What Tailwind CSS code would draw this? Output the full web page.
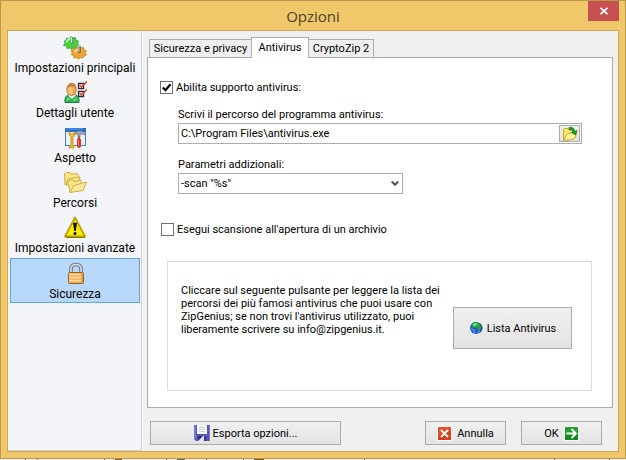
<!DOCTYPE html>
<html lang="it">
<head>
    <meta charset="UTF-8">
    <meta name="viewport" content="width=device-width, initial-scale=1">
    <title>Opzioni</title>
    <script src="https://cdn.jsdelivr.net/npm/@tailwindcss/browser@4"></script>
</head>
<body class="min-h-screen flex flex-col bg-white font-['Roboto',sans-serif] text-[11px] leading-[13px] text-black">
<div class="flex-1 flex flex-col border border-[#b8984d] bg-[#f0c869] px-[6px] pb-[6px]">
  <!-- Barra del titolo -->
  <header class="relative h-[29px] flex items-center justify-center">
    <h1 class="text-[15px] leading-6 text-[#4a4231] font-['Open_Sans',sans-serif]">Opzioni</h1>
    <button class="absolute top-0 right-0 w-[31px] h-5 flex items-center justify-center bg-[#c75050]" aria-label="Chiudi">
      <svg class="w-2 h-2" viewBox="0 0 8 8" stroke="#fff" stroke-width="1.8"><path d="M.5.8l7 6.400M7.500.8l-7 6.400"/></svg>
    </button>
  </header>

  <div class="flex-1 flex border border-[#cfa755] bg-[#f0f0f0]">
    <!-- Categorie -->
    <nav class="w-[134px] shrink-0 flex flex-col bg-[#f4f5f8] border-r border-b border-[#d0d0d0] pl-[2px] pr-px pt-[2px] text-xs leading-4">
      <button class="h-[45px] flex flex-col items-center pt-[3px]">
        <svg class="w-6 h-6" viewBox="0 0 24 24">
          <path d="M1 5l2-.5L3.500 2l2.500.5L8 .5l2 1.500 2.500-.5.5 2.500 2.500 1-1 2 1.500 2-2.500 1-.5 2.500-2.500-.5-2 1.500-2-1.500-2.500.5L3.500 10 .5 9.500 2 7z" fill="#43d03c" stroke="#37a03a" stroke-width=".7"/>
          <path d="M3.500 6.500q1-3.500 4-4" stroke="#a9f79c" stroke-width="1.800" fill="none"/>
          <path d="M9 1v7" stroke="#6f8f76" stroke-width="2.400"/><path d="M8.500 1v6" stroke="#dfe6ea"/>
          <path d="M8 15l2.500-1v-2.500l3 .5 2-1.500 2 1.500 3-.5.500 2.500 2.500 1-1.500 2 1.500 2-2.500 1-1 2-2.500-.5-2 1.500-2-1.500-2.500.5-.5-2.500-2.500-1 1.500-1.500z" fill="#eda731" stroke="#b5771c" stroke-width=".7"/>
          <path d="M11.500 16q2-3 5-2.500" stroke="#ffe090" stroke-width="1.800" fill="none"/>
          <path d="M16.500 10v7" stroke="#5f6369" stroke-width="2.400"/><path d="M16 10v6" stroke="#cfd3d8"/>
        </svg>
        <span>Impostazioni principali</span>
      </button>
      <button class="h-[45px] flex flex-col items-center pt-[3px]">
        <svg class="w-6 h-6" viewBox="0 0 24 24">
          <path d="M2 21.500v-3q0-4 5-5h4q5 1 5 5v3z" fill="#36b557" stroke="#15803b"/>
          <path d="M5 14l4 4 4-4z" fill="#fff"/><path d="M4 20q0-3 3-3M11 20q1-3 3-2" stroke="#98eaa6" fill="none"/>
          <ellipse cx="8.500" cy="8.500" rx="4.700" ry="6" fill="#f7a653" stroke="#c07a3a"/>
          <path d="M4.500 7q0-5 4.500-5 4 0 4 4.500-5-2-8.500.5z" fill="#c98245"/>
          <ellipse cx="7.500" cy="9.500" rx="2.500" ry="3.500" fill="#ffc07a"/>
          <path d="M15.500 2.500h5v5h-5zM15.500 10.500h5v5h-5z" fill="#fff" stroke="#282f45" stroke-width="1.300"/>
          <path d="M16.500 4l2 2L24 .5M16.500 12l2 2L24 8.500" fill="none" stroke="#ef3524" stroke-width="1.500"/>
        </svg>
        <span>Dettagli utente</span>
      </button>
      <button class="h-[45px] flex flex-col items-center pt-[3px]">
        <svg class="w-6 h-6" viewBox="0 0 24 24">
          <rect x="2.500" y="2.500" width="20" height="17" fill="#eaf2fc" stroke="#3f82cf"/>
          <path d="M2 2h21v4H2z" fill="#2568d2"/><path d="M3 3h17" stroke="#5ba2f5"/>
          <path d="M6 5v4l2 2v8l-2 2v1h5v-1l-1-2v-8l2-2V5l-2 3H8z" fill="#f4bf2a" stroke="#b9800d" stroke-width=".7"/>
          <path d="M12 8l2-3h6l3 4-4-1h-2v3h-2V8z" fill="#a8adb5" stroke="#646973" stroke-width=".7"/>
          <path d="M16 10v3" stroke="#777" stroke-width="2"/>
          <path d="M16 14v6" stroke="#d93520" stroke-width="4" stroke-linecap="round"/><path d="M15.500 14v6" stroke="#ff795d"/>
        </svg>
        <span>Aspetto</span>
      </button>
      <button class="h-[45px] flex flex-col items-center pt-[3px]">
        <svg class="w-6 h-6" viewBox="0 0 24 24" fill="#fbe58a" stroke="#ceb042" stroke-linejoin="round">
          <path d="M2 14L1.500 3 3 1.500h4L8 3l6-.5 1.500 2V7L5 8.500z"/>
          <path d="M3 14L5 8l12-2-2 8z" fill="#fbe99a"/>
          <path d="M7 21.500L5 11l1.500-2H10l1.500 1.500L18 9v4z"/>
          <path d="M7 21.500l3.500-7L23.500 11 20 19.500z" fill="#fbe99a"/>
        </svg>
        <span>Percorsi</span>
      </button>
      <button class="h-[45px] flex flex-col items-center pt-[3px]">
        <svg class="w-6 h-6" viewBox="0 0 24 24">
          <path d="M12 1.500L22 20.500H2z" fill="#ffed00" stroke="#b7a300" stroke-width="1.800" stroke-linejoin="round"/>
          <path d="M3 21.500h19" stroke="#827500"/>
          <path d="M10 7q2-1 4 0l-1.200 8h-1.600z" fill="#111"/><circle cx="12" cy="17.500" r="1.600" fill="#111"/>
        </svg>
        <span>Impostazioni avanzate</span>
      </button>
      <button class="h-[45px] flex flex-col items-center pt-[3px] border border-[#62a3e1] bg-[#b8d8f9]">
        <svg class="w-6 h-6" viewBox="0 0 24 24">
          <path d="M8 12V7.500q0-5 5-5t5 5V12" fill="none" stroke="#6f7680" stroke-width="3.600"/>
          <path d="M8 12V7.500q0-5 5-5t5 5V12" fill="none" stroke="#d6dce3" stroke-width="1.600"/>
          <rect x="5.500" y="10.500" width="15" height="11" rx="1" fill="#f7ad55" stroke="#9b622d"/>
          <path d="M6 12.500h13M6 15.500h13M6 18.500h13" stroke="#ffdfa8" stroke-width="1.400"/>
          <path d="M19 11v10" stroke="#dc8736"/>
        </svg>
        <span>Sicurezza</span>
      </button>
    </nav>

    <main class="flex-1 flex flex-col border-l border-white pl-1 pr-[5px] pt-[6px] pb-[6px]">
      <!-- Schede -->
      <div class="flex items-end pl-[2px] -mb-px relative" role="tablist">
        <button class="w-[103px] h-[19px] border border-[#acacac] bg-[#efefef] whitespace-nowrap" role="tab">Sicurezza e privacy</button>
        <button class="w-[58px] h-[21px] -ml-px border border-b-0 border-[#acacac] bg-white pb-[2px] whitespace-nowrap" role="tab" aria-selected="true">Antivirus</button>
        <button class="w-[66px] h-[19px] -ml-px border border-[#acacac] bg-[#efefef] whitespace-nowrap" role="tab">CryptoZip 2</button>
      </div>

      <section class="flex-1 flex flex-col border border-[#acacac] bg-white pl-3 pr-5 pt-[23px] pb-4">
        <label class="flex items-center gap-[3px] h-[13px]">
          <span class="relative w-[13px] h-[13px]">
            <input type="checkbox" checked class="peer block appearance-none w-[13px] h-[13px] border border-[#707070] bg-white">
            <svg class="absolute inset-0 w-[13px] h-[13px] hidden peer-checked:block pointer-events-none" viewBox="0 0 13 13" fill="none" stroke="#000" stroke-width="2.200"><path d="M2.800 6.500l2.700 2.700 5-6"/></svg>
          </span>
          Abilita supporto antivirus:
        </label>

        <div class="flex flex-col pl-[18px] pr-[10px] pt-[14px]">
          <label for="percorso" class="pb-[2px]">Scrivi il percorso del programma antivirus:</label>
          <div class="flex items-center h-[21px] border border-[#acacac] bg-white pr-px">
            <input id="percorso" type="text" value="C:\Program Files\antivirus.exe" class="flex-1 min-w-0 px-[2px] outline-none">
            <button class="w-[21px] h-[17px] flex items-center justify-center border border-[#acacac] bg-linear-to-b from-[#f0f0f0] to-[#e3e3e3]" aria-label="Sfoglia">
              <svg class="w-4 h-4" viewBox="0 0 16 16" stroke-linejoin="round">
                <path d="M1.500 14.500v-11l1-1h3l1 1.500h5v5z" fill="#ffeb71" stroke="#c9a51e"/>
                <path d="M1.500 14.500l3-6 3-1.500 7-.5-1 5-3 2z" fill="#fff19a" stroke="#c9a51e"/>
                <path d="M7 1.500q5-1 6 4l2-1-1.500 4.500-4-2.500 1.500-.5q-1-3-4-2.500z" fill="#23a12a" stroke="#12741a" stroke-width=".7"/>
              </svg>
            </button>
          </div>
          <label for="parametri" class="pt-[14px] pb-[2px]">Parametri addizionali:</label>
          <div class="relative w-[225px]">
            <select id="parametri" class="block appearance-none w-full h-[21px] border border-[#acacac] bg-white px-[2px] outline-none">
              <option>-scan "%s"</option>
            </select>
            <svg class="absolute right-1 top-[7px] w-2 h-[7px] pointer-events-none" viewBox="0 0 8 7" fill="none" stroke="#555" stroke-width="2"><path d="M.7 1.500L4 4.800l3.300-3.300"/></svg>
          </div>
        </div>

        <label class="flex items-center gap-[3px] h-[13px] mt-[29px] pl-px">
          <span class="relative w-[13px] h-[13px]">
            <input type="checkbox" class="peer block appearance-none w-[13px] h-[13px] border border-[#707070] bg-white">
            <svg class="absolute inset-0 w-[13px] h-[13px] hidden peer-checked:block pointer-events-none" viewBox="0 0 13 13" fill="none" stroke="#000" stroke-width="2.200"><path d="M2.800 6.500l2.700 2.700 5-6"/></svg>
          </span>
          Esegui scansione all'apertura di un archivio
        </label>

        <div class="flex-1 flex items-start justify-between ml-[7px] mt-[25px] border border-[#dcdcdc] pl-[13px] pr-[19px]">
          <p class="w-[260px] pt-[22px]">Cliccare sul seguente pulsante per leggere la lista dei percorsi dei più famosi antivirus che puoi usare con ZipGenius; se non trovi l'antivirus utilizzato, puoi liberamente scrivere su info@zipgenius.it.</p>
          <button class="w-[119px] h-[42px] mt-[45px] flex items-center justify-center gap-1 border border-[#acacac] bg-linear-to-b from-[#f0f0f0] to-[#e3e3e3]">
            <svg class="w-[14px] h-[14px]" viewBox="0 0 14 14">
              <circle cx="7" cy="7" r="6" fill="#255fc4"/>
              <path d="M3 2.500Q6 0 10 2l2 3-1 3-2 1-1-3-3 1-2-1z" fill="#27a443"/>
              <path d="M4 3l3-1 1 2-3 1z" fill="#8df08a"/>
              <path d="M2 8l3 1 1 3M11 9l-2 3" stroke="#5bb3f2" fill="none"/>
              <path d="M11 2.500a6 6 0 0 1 0 9" stroke="#173a78" fill="none"/>
            </svg>
            Lista Antivirus
          </button>
        </div>
      </section>

      <!-- Pulsanti -->
      <footer class="flex items-center pt-[13px] pl-[3px] pr-[11px]">
        <button class="w-[191px] h-6 flex items-center justify-center gap-[3px] border border-[#acacac] bg-linear-to-b from-[#f0f0f0] to-[#e3e3e3]">
          <svg class="w-4 h-4" viewBox="0 0 16 16">
            <path d="M0 0h16v16H2l-2-2z" fill="#5555b8"/><path d="M0 0h2v14H0zM15 0h1v16h-1z" fill="#7777d6"/>
            <path d="M3 0h10v9H3z" fill="#f8f8fb"/><path d="M5 2.500h6M5 4.500h6M5 6.500h6" stroke="#cfcfd8"/>
            <path d="M4 11h8v5H4z" fill="#e4e4ee"/><path d="M4 16v-5h5z" fill="#30307f"/><path d="M10 11h2v5h-2z" fill="#363693"/>
          </svg>
          Esporta opzioni...
        </button>
        <button class="w-[81px] h-6 ml-auto flex items-center justify-center gap-[5px] border border-[#acacac] bg-linear-to-b from-[#f0f0f0] to-[#e3e3e3]">
          <svg class="w-[15px] h-[15px]" viewBox="0 0 15 15">
            <rect x=".5" y=".5" width="14" height="14" fill="#e4512d" stroke="#fff"/><path d="M1 14V9l13-3v8z" fill="#d93d19"/>
            <path d="M4 4l7 7M11 4l-7 7" stroke="#fff" stroke-width="1.800"/>
          </svg>
          Annulla
        </button>
        <button class="w-[81px] h-6 ml-[15px] flex items-center justify-center gap-[5px] border border-[#acacac] bg-linear-to-b from-[#f0f0f0] to-[#e3e3e3]">
          OK
          <svg class="w-[15px] h-[15px]" viewBox="0 0 15 15">
            <rect x=".5" y=".5" width="14" height="14" fill="#269d30" stroke="#fff"/><path d="M1 14V9l13-3v8z" fill="#148920"/>
            <path d="M2.500 7.500h9M7.500 3l4.500 4.500L7.500 12" fill="none" stroke="#fff" stroke-width="1.900"/>
          </svg>
        </button>
      </footer>
    </main>
  </div>
</div>
<!-- Bordo della finestra sottostante -->
<svg class="block w-full h-px bg-[#f0f0f0]" viewBox="0 0 626 1" preserveAspectRatio="none">
  <path d="M25 0h1v1h-1zM104 0h1v1h-1zM166 0h1v1h-1zM206 0h1v1h-1zM243 0h1v1h-1zM364 0h1v1h-1zM554 0h1v1h-1zM609 0h1v1h-1z" fill="#555"/>
  <path d="M36 0h3v1h-3z" fill="#bbb"/><path d="M115 0h7v1h-7zM254 0h10v1h-10z" fill="#75582e"/><path d="M177 0h8v1h-8z" fill="#466b78"/>
</svg>
</body>
</html>
